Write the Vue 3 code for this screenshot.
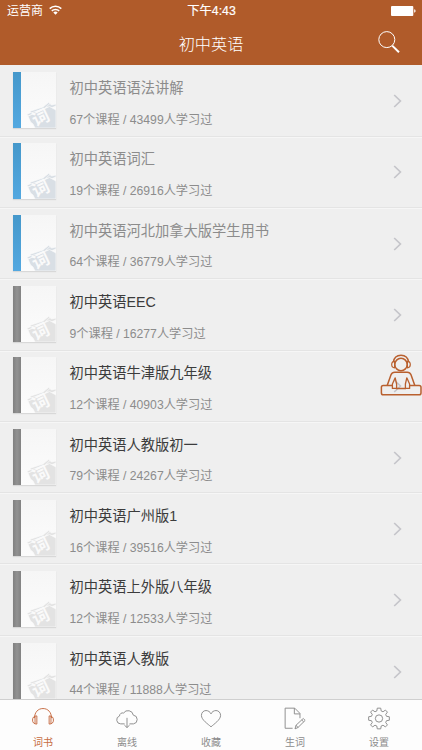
<script setup>
const courses = [
  { title: '初中英语语法讲解', lessons: 67, learners: 43499, active: true },
  { title: '初中英语词汇', lessons: 19, learners: 26916, active: true },
  { title: '初中英语河北加拿大版学生用书', lessons: 64, learners: 36779, active: true },
  { title: '初中英语EEC', lessons: 9, learners: 16277 },
  { title: '初中英语牛津版九年级', lessons: 12, learners: 40903 },
  { title: '初中英语人教版初一', lessons: 79, learners: 24267 },
  { title: '初中英语广州版1', lessons: 16, learners: 39516 },
  { title: '初中英语上外版八年级', lessons: 12, learners: 12533 },
  { title: '初中英语人教版', lessons: 44, learners: 11888 },
]
</script>

<template>
  <div class="app">
    <header class="header">
      <div class="status">
        <div class="carrier">
          <span>运营商</span>
          <svg class="wifi" viewBox="0 0 13 10" width="13" height="10" fill="none" stroke="#fff" stroke-width="1.5">
            <path d="M.7 3.6a8.3 8.3 0 0 1 11.6 0M2.8 5.9a5.3 5.3 0 0 1 7.4 0" />
            <path d="M6.5 9.8 4.3 7.5a3.2 3.2 0 0 1 4.4 0z" fill="#fff" stroke="none" />
          </svg>
        </div>
        <span class="time">下午4:43</span>
        <div class="power">
          <svg viewBox="0 0 25 10" width="25" height="10" fill="#fff">
            <rect width="22.3" height="10" rx="1" />
            <path d="M23.2 3.3q1.4.3 1.4 1.7t-1.4 1.7z" />
          </svg>
        </div>
      </div>
      <div class="nav">
        <h1>初中英语</h1>
        <svg class="search" viewBox="0 0 22 22" width="22" height="22" fill="none" stroke="#fff">
          <circle cx="8.8" cy="8.6" r="8" stroke-width="1" />
          <path d="M14.2 14.6 21 21.3" stroke-width="2" />
        </svg>
      </div>
    </header>

    <main class="list">
      <div v-for="c in courses" :key="c.title" class="row" :class="{ active: c.active }">
        <div class="book">
          <div class="spine"></div>
          <svg class="mark" viewBox="0 0 29 26" width="29" height="26">
            <g class="pages">
              <path d="M0 12.2 5 10 18 4 22 0 24.3 3 29 2v2L24 6 20 5 7 12 1 14z" />
              <path d="M3 9.2 16 5 21.5.5 23 1.5 17.5 6.5 4 11z" />
              <path d="M1 14.2 22.5 4.5 29 8V26H8L6 22 3.5 20z" />
            </g>
            <text x="0" y="0" transform="translate(8.6 24.4) rotate(-25)">词</text>
          </svg>
        </div>
        <div class="info">
          <div class="title">{{ c.title }}</div>
          <div class="meta">{{ c.lessons }}个课程 / {{ c.learners }}人学习过</div>
        </div>
        <svg class="chevron" viewBox="0 0 9 14" width="9" height="14" fill="none" stroke="#c5c5ca" stroke-width="1.7">
          <path d="m1.2 1 6.2 6-6.2 6" />
        </svg>
      </div>
    </main>

    <svg class="player" viewBox="0 0 42 44" width="42" height="44" fill="none" stroke="#b9602f" stroke-width="1.5" stroke-linejoin="round">
      <circle cx="21" cy="10.5" r="6.2" />
      <path d="M13.4 8.2C14 3.6 17 1.3 21 1.3s7 2.3 7.6 6.9" />
      <path d="M14.6 7.4v6.4c-2 0-2.9-1.2-2.9-3.2s.9-3.2 2.9-3.2zM27.4 7.4v6.4c2 0 2.9-1.2 2.9-3.2s-.9-3.2-2.9-3.2z" stroke-width="1.2" />
      <path d="M7.2 31.5 11 20.8Q12 18.2 14.8 18.2h12.4Q30 18.2 31 20.8l3.8 10.7" />
      <path d="M15.2 23.8 12.4 30v4.4h4.2V30zM26.8 23.8l2.8 6.2v4.4h-4.2V30z" stroke-width="1.3" />
      <path d="M12 31.5H3.2q-1.8 0-1.8 1.8v5.6q0 1.8 1.8 1.8h36q1.8 0 1.8-1.8v-5.6q0-1.8-1.8-1.8H30M16 34.5h10" />
    </svg>

    <nav class="tabs">
      <div class="tab current">
        <svg viewBox="0 0 24 24" width="24" height="24">
          <path d="M3.1 11.6C3.2 5.5 6.8 1.6 12 1.6s8.8 3.9 8.9 10" />
          <path d="M5.6 9.3v8.5c-3 0-4.5-1.4-4.5-4.2s1.5-4.3 4.5-4.3zM18.4 9.3v8.5c3 0 4.5-1.4 4.5-4.2s-1.5-4.3-4.5-4.3zM3.7 9.8v7.6M20.3 9.8v7.6" />
        </svg>
        <span>词书</span>
      </div>
      <div class="tab">
        <svg viewBox="0 0 24 24" width="24" height="24">
          <path d="M9.5 17.6H5.4a4.2 4.2 0 0 1-1.2-8.2 3.2 3.2 0 0 1 4.2-3.1A5.6 5.6 0 0 1 18.6 8.5a4.6 4.6 0 0 1 .2 9.1h-4.2M12 11.3v10M9.3 18.9l2.7 2.6 2.7-2.6" />
        </svg>
        <span>离线</span>
      </div>
      <div class="tab">
        <svg viewBox="0 0 24 24" width="24" height="24">
          <path d="M12 20.7C9 17.8 2 13.6 2 8.7 2 5.8 4.2 3.7 6.8 3.7c2.3 0 4.3 1.4 5.2 3.5.9-2.1 2.9-3.5 5.2-3.5C19.8 3.7 22 5.8 22 8.7c0 4.9-7 9.1-10 12z" />
        </svg>
        <span>收藏</span>
      </div>
      <div class="tab">
        <svg viewBox="0 0 24 24" width="24" height="24">
          <path d="M9.5 22.2H1.7v-21h10l5.5 5.5v5M11.3 1.2v6h5.9M12 22.8l1.1-3.8 7.5-7 2 2-7.5 7.4zM13.1 19l2 2.4M19 13.5l2 2" />
        </svg>
        <span>生词</span>
      </div>
      <div class="tab">
        <svg viewBox="0 0 24 24" width="24" height="24">
          <circle cx="12" cy="12" r="3.8" />
          <path d="m10.2 1.2-.5 3-1.9.8-2.5-1.8-2.1 2.1L5 7.8l-.8 1.9-3 .5v3.6l3 .5.8 1.9-1.8 2.5 2.1 2.1L7.8 19l1.9.8.5 3h3.6l.5-3 1.9-.8 2.5 1.8 2.1-2.1-1.8-2.5.8-1.9 3-.5v-3.6l-3-.5-.8-1.9 1.8-2.5-2.1-2.1L16.2 5l-1.9-.8-.5-3z" />
        </svg>
        <span>设置</span>
      </div>
    </nav>
  </div>
</template>

<style>
body {
  margin: 0;
  overflow: hidden;
}
</style>

<style scoped>
.app {
  position: relative;
  display: flex;
  flex-direction: column;
  width: 422px;
  height: 750px;
  overflow: hidden;
  background: #efefef;
  font-family: "Liberation Sans", "Noto Sans CJK SC", sans-serif;
}
.header {
  flex: none;
  height: 65.4px;
  background: #b05b2a;
  color: #fff;
}
.status {
  display: grid;
  grid-template-columns: 1fr auto 1fr;
  align-items: center;
  height: 22px;
  padding: 0 6px 0 7px;
  font-size: 12px;
  line-height: 22px;
}
.carrier {
  display: flex;
  align-items: center;
  gap: 6px;
}
.wifi {
  margin-top: -2px;
}
.time {
  font-size: 12.3px;
  -webkit-text-stroke: 0.2px #fff;
}
.power {
  display: flex;
  justify-content: flex-end;
}
.nav {
  display: grid;
  grid-template-columns: 1fr auto 1fr;
  align-items: center;
  height: 42px;
  padding-right: 22px;
  padding-left: 22px;
}
h1 {
  grid-column: 2;
  margin: 2px 0 0;
  font-size: 16.2px;
  font-weight: 300;
  line-height: 24px;
}
.search {
  justify-self: end;
  margin-top: -3px;
}
.list {
  flex: 1;
  min-height: 0;
  overflow: hidden;
}
.row {
  box-sizing: border-box;
  display: flex;
  height: 71.3px;
  padding: 6.8px 20px 0 13px;
  border-bottom: 1px solid #e4e4e4;
  box-shadow: 0 1px 0 #f6f6f6;
}
.book {
  display: flex;
  justify-content: space-between;
  align-items: flex-end;
  width: 43px;
  height: 56px;
  background: linear-gradient(#f6f6f6, #fcfcfc);
  box-shadow: 0 1px 1px #d8d8d8;
}
.spine {
  width: 8px;
  height: 100%;
  background: linear-gradient(90deg, #808080, #929292 50%, #828282);
}
.active .spine {
  background: linear-gradient(#4598cb, #53a8e0);
}
.mark {
  flex: none;
}
.pages {
  fill: #e3e3e3;
  stroke: #fafafa;
  stroke-width: 0.7;
}
.active .pages {
  fill: #d9dfe5;
}
.mark text {
  fill: #fafafa;
  font-size: 17px;
  font-weight: 700;
}
.info {
  flex: 1;
  padding-left: 13.5px;
  white-space: nowrap;
}
.title {
  height: 20px;
  margin-top: 6px;
  color: #3c3c3c;
  font-size: 14.25px;
  line-height: 20px;
}
.active .title {
  color: #8c8c8c;
}
.meta {
  height: 18px;
  margin-top: 12.6px;
  color: #8c8c8c;
  font-size: 12.2px;
  line-height: 18px;
}
.chevron {
  margin-top: 22px;
}
.player {
  position: absolute;
  top: 354px;
  right: 0;
}
.tabs {
  flex: none;
  box-sizing: border-box;
  display: flex;
  height: 51px;
  padding: 0 1px;
  border-top: 1px solid #cfcfcf;
  background: #fdfdfd;
}
.tab {
  flex: 1;
  display: flex;
  flex-direction: column;
  align-items: center;
  padding-top: 7px;
  color: #8c8c8c;
  font-size: 10px;
  line-height: 14px;
}
.tab span {
  margin-top: 6px;
}
.tab svg {
  fill: none;
  stroke: currentColor;
  stroke-width: 1;
}
.current {
  color: #c66c43;
}
</style>
